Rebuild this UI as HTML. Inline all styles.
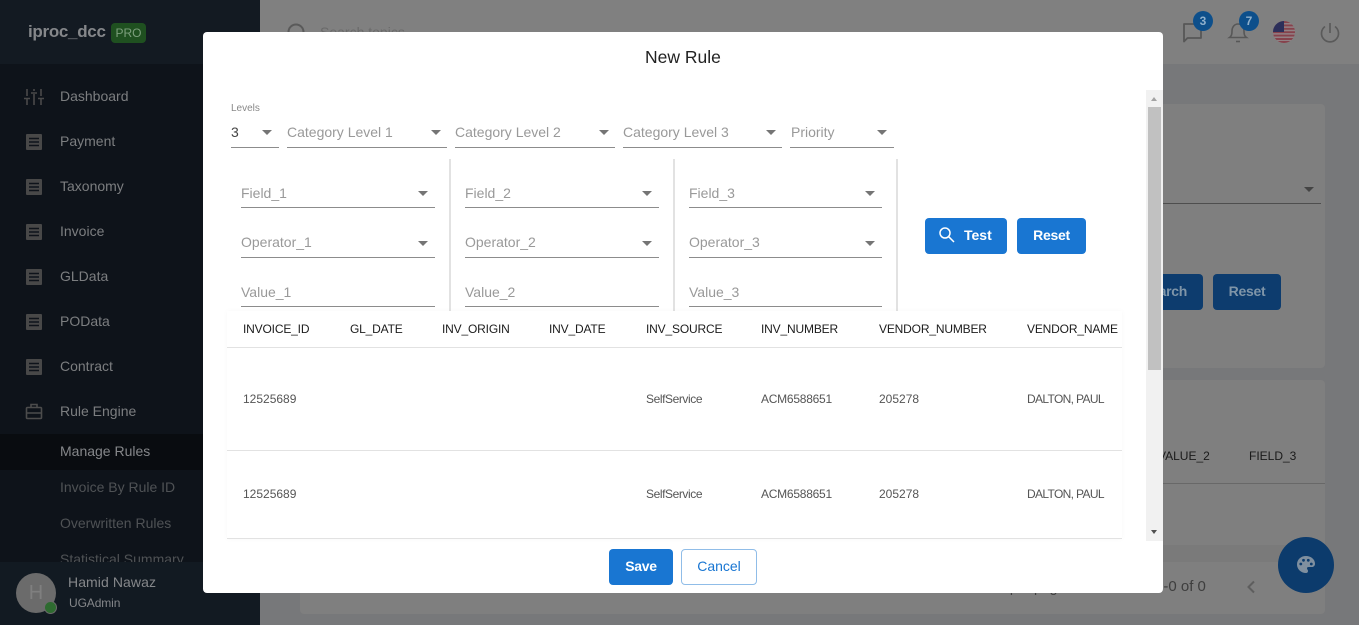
<!DOCTYPE html>
<html><head><meta charset="utf-8">
<style>
html,body{margin:0;padding:0;width:1359px;height:625px;overflow:hidden;background:#77787a;font-family:"Liberation Sans",sans-serif}
div,span,svg{position:absolute}
.t{white-space:nowrap;line-height:20px;height:20px}
.nav{font-size:14px;color:#7c7e80;left:60px}
.sub{font-size:14px;color:#4f5255;left:60px}
.ph{font-size:14px;color:#999}
.ul{height:1px;background:#8c8c8c}
.ar{width:0;height:0;border-left:5px solid transparent;border-right:5px solid transparent;border-top:5px solid #757575}
.dv{width:2px;top:159px;height:152px;background:#e2e2e2}
.th{font-size:12px;color:#1c1c1c;top:319px;letter-spacing:-.17px}
.td{font-size:12px;color:#555}
.ln{left:227px;width:895px;height:1px;background:#e2e2e2}
.btn{background:#1976d2;border-radius:4px;color:#fff;font-weight:700;font-size:14px;text-align:center;line-height:34px;height:36px;letter-spacing:-.3px}
</style></head>
<body>
<!-- main background -->
<div style="left:260px;top:0;width:1099px;height:64px;background:#808080"></div>
<svg style="left:284px;top:20px" width="24" height="24" viewBox="0 0 24 24" fill="none" stroke="#5a5a5a" stroke-width="2"><circle cx="12" cy="12" r="7.5"/></svg>
<div class="t" style="left:320px;top:22px;font-size:14px;color:#6a6a6a">Search topics</div>

<!-- top right icons -->
<svg style="left:1180px;top:20px" width="24" height="24" viewBox="0 0 24 24" fill="none" stroke="#575757" stroke-width="1.8"><path d="M4 4h17v14H7.5L4 21.5z" stroke-linejoin="round"/></svg>
<svg style="left:1226px;top:19px" width="24" height="26" viewBox="0 0 24 26" fill="none" stroke="#575757" stroke-width="1.6"><path d="M3.5 18.5c2-1.5 2.5-3 2.5-6.5 0-4 2.500-7 6-7s6 3 6 7c0 3.500.5 5 2.500 6.500z"/><path d="M10 22.500h4"/></svg>
<div style="left:1193px;top:11px;width:20px;height:20px;border-radius:50%;background:#0d4f8b;color:#8fb0cc;font-size:12px;font-weight:700;text-align:center;line-height:20px">3</div>
<div style="left:1239px;top:11px;width:20px;height:20px;border-radius:50%;background:#0d4f8b;color:#8fb0cc;font-size:12px;font-weight:700;text-align:center;line-height:20px">7</div>
<svg style="left:1273px;top:21px" width="22" height="22" viewBox="0 0 22 22">
<defs><clipPath id="fc"><circle cx="11" cy="11" r="11"/></clipPath></defs>
<g clip-path="url(#fc)"><rect width="22" height="22" fill="#928084"/>
<path d="M0 1h22M0 4.400h22M0 7.800h22M0 11.200h22M0 14.600h22M0 18h22M0 21h22" stroke="#86424c" stroke-width="1.900"/>
<rect width="11" height="11" fill="#2c2f5a"/></g></svg>
<svg style="left:1318px;top:20px" width="24" height="24" viewBox="0 0 24 24" fill="none" stroke="#5a5a5a" stroke-width="1.700"><path d="M12 3v10"/><path d="M7 6.500a8.500 8.500 0 1 0 10 0"/></svg>

<!-- cards -->
<div style="left:300px;top:104px;width:1025px;height:264px;background:#7f7f7f;border-radius:4px"></div>
<div style="left:300px;top:380px;width:1025px;height:165px;background:#7f7f7f;border-radius:4px 4px 0 0"></div>
<div style="left:300px;top:545px;width:1025px;height:17px;background:#7a7a7a"></div>
<div style="left:300px;top:562px;width:1025px;height:52px;background:#7f7f7f;border-radius:0 0 4px 4px"></div>
<div style="left:1100px;top:203px;width:221px;height:1px;background:#4e4e4e"></div>
<div class="ar" style="left:1304px;top:187px;border-top-color:#444"></div>
<div style="left:1120px;top:274px;width:83px;height:36px;background:#0d3c6e;border-radius:4px;color:#7f95a8;font-size:14px;font-weight:700;line-height:35px;text-align:right;padding-right:16px;box-sizing:border-box;letter-spacing:-.3px">Search</div>
<div style="left:1213px;top:274px;width:68px;height:36px;background:#0d3c6e;border-radius:4px;color:#7f95a8;font-size:14px;font-weight:700;line-height:35px;text-align:center;letter-spacing:-.3px">Reset</div>
<div class="t" style="left:1158px;top:446px;font-size:12px;color:#1a1a1a">VALUE_2</div>
<div class="t" style="left:1249px;top:446px;font-size:12px;color:#1a1a1a">FIELD_3</div>
<div style="left:300px;top:483px;width:1025px;height:1px;background:#686868"></div>
<div class="t" style="left:971px;top:577px;font-size:14px;color:#3e3e3e">Rows per page:</div>
<div class="t" style="left:1155px;top:577px;font-size:15px;color:#3e3e3e">0-0 of 0</div>
<svg style="left:1243px;top:579px" width="16" height="16" viewBox="0 0 16 16" fill="none" stroke="#5e5e5e" stroke-width="2"><path d="M11 2.500 5.500 8 11 13.500"/></svg>
<div style="left:1278px;top:537px;width:56px;height:56px;border-radius:50%;background:#0c3b6c"></div>
<svg style="left:1295px;top:555px" width="22" height="20" viewBox="0 0 22 20"><path fill="#7f8f9f" d="M11 1C5.500 1 2 4.800 2 9.500S6 18 11 18c1.500 0 2-1 2-2 0-1.300-1-1.500-1-2.700 0-.9.700-1.300 1.700-1.300h2.800c2.300 0 3.500-1.300 3.500-3.300C20 4.400 16 1 11 1z"/><g fill="#0c3b6c"><circle cx="5.800" cy="9" r="1.400"/><circle cx="8.500" cy="5.300" r="1.400"/><circle cx="13.300" cy="5.300" r="1.400"/><circle cx="16.300" cy="9" r="1.400"/></g></svg>

<!-- sidebar -->
<div style="left:0;top:0;width:260px;height:625px;background:#0e131a;overflow:hidden">
<div style="left:0;top:0;width:260px;height:64px;background:#131a22"></div>
<div class="t" style="left:28px;top:22px;font-size:17px;font-weight:700;color:#85878a;letter-spacing:-.3px">iproc_dcc</div>
<div style="left:111px;top:23px;width:35px;height:20px;border-radius:4px;background:#1f5020;color:#7d9f7d;font-size:12px;text-align:center;line-height:20px">PRO</div>

<svg style="left:24px;top:88px" width="20" height="18" viewBox="0 0 20 18" stroke="#4a4a4a" stroke-width="1.600" fill="none"><path d="M3 1v7M3 11v6M0 10.500h6M10 1v2M10 6v11M7 5h6M17 1v7M17 11v6M14 10.500h6"/></svg>
<div class="t nav" style="top:86px">Dashboard</div>
<svg style="left:26px;top:134px" width="16" height="16" viewBox="0 0 16 16"><rect width="16" height="16" fill="#484848" rx="1"/><path d="M3 4.500h10M3 8h10M3 11.500h10" stroke="#0e131a" stroke-width="1.500"/></svg>
<div class="t nav" style="top:131px">Payment</div>
<svg style="left:26px;top:179px" width="16" height="16" viewBox="0 0 16 16"><rect width="16" height="16" fill="#484848" rx="1"/><path d="M3 4.500h10M3 8h10M3 11.500h10" stroke="#0e131a" stroke-width="1.500"/></svg>
<div class="t nav" style="top:176px">Taxonomy</div>
<svg style="left:26px;top:224px" width="16" height="16" viewBox="0 0 16 16"><rect width="16" height="16" fill="#484848" rx="1"/><path d="M3 4.500h10M3 8h10M3 11.500h10" stroke="#0e131a" stroke-width="1.500"/></svg>
<div class="t nav" style="top:221px">Invoice</div>
<svg style="left:26px;top:269px" width="16" height="16" viewBox="0 0 16 16"><rect width="16" height="16" fill="#484848" rx="1"/><path d="M3 4.500h10M3 8h10M3 11.500h10" stroke="#0e131a" stroke-width="1.500"/></svg>
<div class="t nav" style="top:266px">GLData</div>
<svg style="left:26px;top:314px" width="16" height="16" viewBox="0 0 16 16"><rect width="16" height="16" fill="#484848" rx="1"/><path d="M3 4.500h10M3 8h10M3 11.500h10" stroke="#0e131a" stroke-width="1.500"/></svg>
<div class="t nav" style="top:311px">POData</div>
<svg style="left:26px;top:359px" width="16" height="16" viewBox="0 0 16 16"><rect width="16" height="16" fill="#484848" rx="1"/><path d="M3 4.500h10M3 8h10M3 11.500h10" stroke="#0e131a" stroke-width="1.500"/></svg>
<div class="t nav" style="top:356px">Contract</div>
<svg style="left:25px;top:403px" width="18" height="17" viewBox="0 0 18 17" fill="none" stroke="#4c4c4c" stroke-width="1.600"><rect x="1.500" y="4.500" width="15" height="11" rx="1"/><path d="M6 4.500V1.500h6v3M1.500 10h15"/></svg>
<div class="t nav" style="top:401px">Rule Engine</div>
<div style="left:0;top:434px;width:260px;height:36px;background:#090c10"></div>
<div class="t nav" style="top:441px;color:#85878a">Manage Rules</div>
<div class="t sub" style="top:477px">Invoice By Rule ID</div>
<div class="t sub" style="top:513px">Overwritten Rules</div>
<div class="t sub" style="top:549px">Statistical Summary</div>
<div style="left:0;top:562px;width:260px;height:63px;background:#121a22"></div>
<div style="left:16px;top:573px;width:40px;height:40px;border-radius:50%;background:#6b6b6b;color:#7f7f7f;font-size:20px;text-align:center;line-height:40px">H</div>
<div style="left:44px;top:601px;width:11px;height:11px;border-radius:50%;background:#2e6b30;border:1px solid #6b6b6b"></div>
<div class="t" style="left:68px;top:572px;font-size:14px;color:#85878a;letter-spacing:.08px">Hamid Nawaz</div>
<div class="t" style="left:69px;top:593px;font-size:12px;color:#85878a;letter-spacing:-.1px">UGAdmin</div>
</div>

<!-- modal -->
<div style="left:203px;top:32px;width:960px;height:561px;background:#fff;border-radius:4px;overflow:hidden"></div>
<div class="t" style="left:645px;top:47px;font-size:17.5px;color:#222">New Rule</div>

<div class="t" style="left:231px;top:98px;font-size:10px;color:#888;padding-top:1px">Levels</div>
<div class="t" style="left:231px;top:122px;font-size:14px;color:#444">3</div>
<div class="ul" style="left:231px;top:147px;width:48px"></div><div class="ar" style="left:262px;top:130px"></div>
<div class="t ph" style="left:287px;top:122px">Category Level 1</div>
<div class="ul" style="left:287px;top:147px;width:160px"></div><div class="ar" style="left:431px;top:130px"></div>
<div class="t ph" style="left:455px;top:122px">Category Level 2</div>
<div class="ul" style="left:455px;top:147px;width:160px"></div><div class="ar" style="left:599px;top:130px"></div>
<div class="t ph" style="left:623px;top:122px">Category Level 3</div>
<div class="ul" style="left:623px;top:147px;width:159px"></div><div class="ar" style="left:766px;top:130px"></div>
<div class="t ph" style="left:791px;top:122px">Priority</div>
<div class="ul" style="left:790px;top:147px;width:104px"></div><div class="ar" style="left:877px;top:130px"></div>

<div class="dv" style="left:449px"></div>
<div class="dv" style="left:673px"></div>
<div class="dv" style="left:896px"></div>

<div class="t ph" style="left:241px;top:183px">Field_1</div>
<div class="ul" style="left:241px;top:207px;width:194px"></div><div class="ar" style="left:418px;top:191px"></div>
<div class="t ph" style="left:241px;top:232px">Operator_1</div>
<div class="ul" style="left:241px;top:257px;width:194px"></div><div class="ar" style="left:418px;top:241px"></div>
<div class="t ph" style="left:241px;top:282px">Value_1</div>
<div class="ul" style="left:241px;top:306px;width:194px"></div>

<div class="t ph" style="left:465px;top:183px">Field_2</div>
<div class="ul" style="left:465px;top:207px;width:194px"></div><div class="ar" style="left:642px;top:191px"></div>
<div class="t ph" style="left:465px;top:232px">Operator_2</div>
<div class="ul" style="left:465px;top:257px;width:194px"></div><div class="ar" style="left:642px;top:241px"></div>
<div class="t ph" style="left:465px;top:282px">Value_2</div>
<div class="ul" style="left:465px;top:306px;width:194px"></div>

<div class="t ph" style="left:689px;top:183px">Field_3</div>
<div class="ul" style="left:689px;top:207px;width:193px"></div><div class="ar" style="left:865px;top:191px"></div>
<div class="t ph" style="left:689px;top:232px">Operator_3</div>
<div class="ul" style="left:689px;top:257px;width:193px"></div><div class="ar" style="left:865px;top:241px"></div>
<div class="t ph" style="left:689px;top:282px">Value_3</div>
<div class="ul" style="left:689px;top:306px;width:193px"></div>

<div class="btn" style="left:925px;top:218px;width:82px;text-align:left;padding-left:39px;box-sizing:border-box;letter-spacing:0">Test</div>
<svg style="left:938px;top:226px" width="18" height="18" viewBox="0 0 18 18" fill="none" stroke="#fff" stroke-width="1.500"><circle cx="7" cy="7" r="5"/><path d="M10.700 10.700 16 16"/></svg>
<div class="btn" style="left:1017px;top:218px;width:69px">Reset</div>

<!-- table -->
<div style="left:227px;top:311px;width:895px;height:228px;background:#fff;box-shadow:0 0 5px rgba(0,0,0,.03)"></div>
<div class="t th" style="left:243px">INVOICE_ID</div>
<div class="t th" style="left:350px">GL_DATE</div>
<div class="t th" style="left:442px">INV_ORIGIN</div>
<div class="t th" style="left:549px">INV_DATE</div>
<div class="t th" style="left:646px">INV_SOURCE</div>
<div class="t th" style="left:761px">INV_NUMBER</div>
<div class="t th" style="left:879px">VENDOR_NUMBER</div>
<div class="t th" style="left:1027px">VENDOR_NAME</div>
<div class="ln" style="top:347px"></div>
<div class="ln" style="top:450px"></div>
<div class="ln" style="top:538px"></div>
<div class="t td" style="left:243px;top:389px">12525689</div>
<div class="t td" style="left:646px;top:389px;letter-spacing:-.42px">SelfService</div>
<div class="t td" style="left:761px;top:389px;letter-spacing:-.25px">ACM6588651</div>
<div class="t td" style="left:879px;top:389px">205278</div>
<div class="t td" style="left:1027px;top:389px;letter-spacing:-.65px">DALTON, PAUL</div>
<div class="t td" style="left:243px;top:484px">12525689</div>
<div class="t td" style="left:646px;top:484px;letter-spacing:-.42px">SelfService</div>
<div class="t td" style="left:761px;top:484px;letter-spacing:-.25px">ACM6588651</div>
<div class="t td" style="left:879px;top:484px">205278</div>
<div class="t td" style="left:1027px;top:484px;letter-spacing:-.65px">DALTON, PAUL</div>

<!-- scrollbar -->
<div style="left:1146px;top:90px;width:17px;height:451px;background:#f1f1f1"></div>
<div style="left:1148px;top:107px;width:13px;height:263px;background:#c1c1c1"></div>
<div style="left:1151px;top:97px;width:0;height:0;border-left:3.500px solid transparent;border-right:3.500px solid transparent;border-bottom:4px solid #a3a3a3"></div>
<div style="left:1151px;top:530px;width:0;height:0;border-left:3.500px solid transparent;border-right:3.500px solid transparent;border-top:4px solid #505050"></div>

<!-- footer -->
<div class="btn" style="left:609px;top:549px;width:64px">Save</div>
<div style="left:681px;top:549px;width:76px;height:36px;box-sizing:border-box;border:1px solid #90bde8;border-radius:4px;color:#1976d2;font-size:14px;text-align:center;line-height:32px">Cancel</div>
</body></html>
